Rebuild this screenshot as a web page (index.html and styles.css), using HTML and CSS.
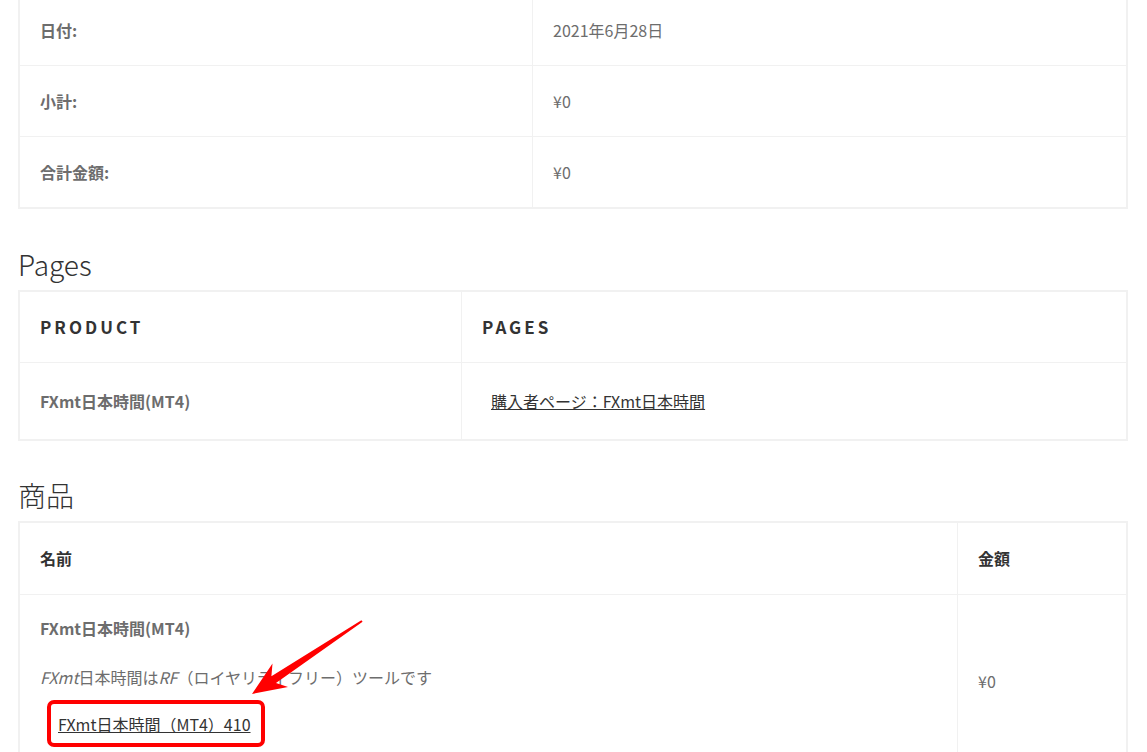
FILE: index.html
```html
<!DOCTYPE html>
<html lang="ja">

<head>
    <meta charset="UTF-8">
    <meta name="viewport" content="width=device-width, initial-scale=1.0">
    <title>注文詳細</title>
    <link rel="stylesheet" href="styles.css">
</head>

<body>

    <div class="page">

        <!-- Order totals -->
        <table class="order-table totals-table">
            <tbody>
                <tr>
                    <th>日付:</th>
                    <td>2021年6月28日</td>
                </tr>
                <tr>
                    <th>小計:</th>
                    <td>¥0</td>
                </tr>
                <tr>
                    <th>合計金額:</th>
                    <td>¥0</td>
                </tr>
            </tbody>
        </table>

        <!-- Pages -->
        <h2 class="section-title">Pages</h2>
        <table class="order-table pages-table">
            <thead>
                <tr>
                    <th class="caps">Product</th>
                    <th class="caps">Pages</th>
                </tr>
            </thead>
            <tbody>
                <tr>
                    <th>FXmt日本時間(MT4)</th>
                    <td><a href="#" class="page-link">購入者ページ：FXmt日本時間</a></td>
                </tr>
            </tbody>
        </table>

        <!-- Products -->
        <h2 class="section-title products-title">商品</h2>
        <table class="order-table products-table">
            <thead>
                <tr>
                    <th class="dark">名前</th>
                    <th class="dark">金額</th>
                </tr>
            </thead>
            <tbody>
                <tr>
                    <td class="product-cell">
                        <p class="product-name">FXmt日本時間(MT4)</p>
                        <p class="product-desc"><em>FXmt</em>日本時間は<em>RF</em>（ロイヤリティフリー）ツールです</p>
                        <div class="download-box">
                            <a href="#" class="download-link">FXmt日本時間（MT4）410</a>
                        </div>
                    </td>
                    <td>¥0</td>
                </tr>
            </tbody>
        </table>

    </div>

    <!-- Annotation arrow -->
    <svg class="note-arrow" width="1147" height="752" viewBox="0 0 1147 752">
        <polygon points="252,694 288,687 276,683 362.6,621.8 361.4,620.2 271.4,676.3 272.5,663.5" fill="#ff0000"/>
    </svg>

</body>

</html>
```

FILE: styles.css
```css
/* Global styles */
body {
    font-family: "Noto Sans CJK JP", "Noto Sans", sans-serif;
    font-size: 16px;
    line-height: 26px;
    color: #6d6d6d;
    background-color: #ffffff;
    margin: 0;
    padding: 0;
    position: relative;
    overflow: hidden;
}

.page {
    margin: -7px 19px 0 18px;
}

/* Headings */
.section-title {
    font-size: 28px;
    font-weight: 300;
    line-height: 34px;
    color: #333333;
    margin: 38px 0 9px;
}

.products-title {
    margin-top: 37px;
}

/* Tables */
.order-table {
    width: 100%;
    border-collapse: collapse;
    border: 2px solid #f1f1f1;
}

.order-table th,
.order-table td {
    padding: 22px 20px;
    text-align: left;
    vertical-align: middle;
    border: 1px solid #f1f1f1;
}

.order-table th {
    font-weight: bold;
    color: #6d6d6d;
}

.totals-table th {
    width: 472px;
}

.pages-table th:first-child {
    width: 401px;
}

.pages-table tbody th,
.pages-table tbody td {
    padding-top: 25px;
    padding-bottom: 25px;
}

.products-table th:first-child,
.products-table td:first-child {
    width: 897px;
}

.products-table thead th {
    padding-top: 22px;
    padding-bottom: 23px;
}

.caps {
    text-transform: uppercase;
    letter-spacing: 3px;
    font-size: 17px;
}

.order-table th.caps,
.order-table th.dark {
    color: #333333;
}

/* Links */
.page-link {
    color: #333333;
    text-decoration: underline;
    margin-left: 9px;
}

.order-table td.product-cell {
    padding-top: 20px;
    padding-bottom: 16px;
}

.product-cell p {
    margin: 0;
}

.product-name {
    font-weight: bold;
}

.product-desc {
    margin-top: 23px !important;
}

.download-box {
    display: inline-block;
    margin: 10px 0 4px 7px;
    padding: 7px 10px 6px 7px;
    border: 4px solid #ff0000;
    border-radius: 7px;
}

.download-link {
    color: #333333;
    text-decoration: underline;
}

/* Annotation */
.note-arrow {
    position: absolute;
    left: 0;
    top: 0;
    pointer-events: none;
}
```
